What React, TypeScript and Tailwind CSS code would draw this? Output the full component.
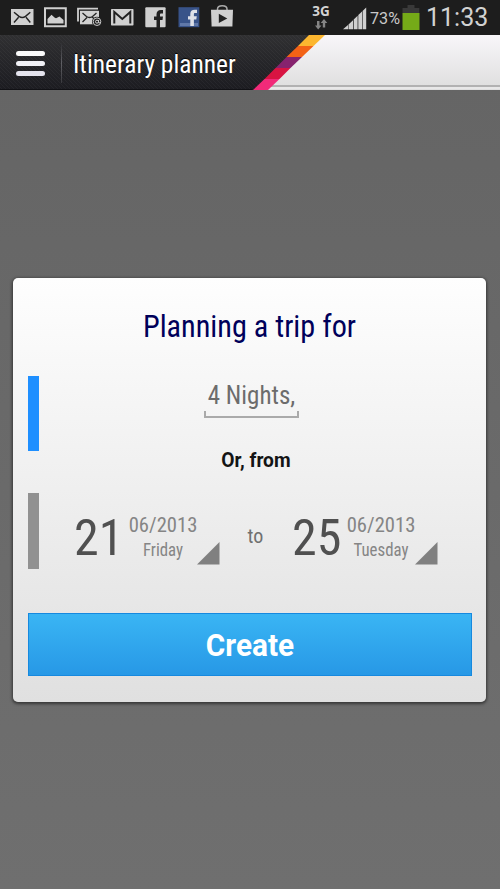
import type { ReactNode } from "react";

function StatusBar() {
  return (
    <div className="flex h-[35px] w-full bg-[#1d1d1d]">
      <svg className="block h-[35px] w-[240px] shrink-0" viewBox="0 0 240 35" fill="none">
        <rect x="11" y="9" width="22.5" height="16" fill="#d0d0d0" />
        <path d="M14 12.3L19 16.4Q22.3 18.6 25.5 16.4L30.3 12.3M14 22.5L18.6 17.3M30.3 22.5L26 17.3" stroke="#222" strokeWidth="1.4" />
        <path d="M45 8.3H65.8V26.2H45Z" stroke="#d0d0d0" strokeWidth="2" />
        <path d="M47.5 23.5V19L51.5 14.8L54.5 17.5L56 18.3L59.5 16.5L63.5 20V23.5Z" fill="#d0d0d0" />
        <path d="M78 21.6V8.6H98" stroke="#d0d0d0" strokeWidth="1.8" />
        <rect x="80" y="10.8" width="19" height="13.5" fill="#d0d0d0" />
        <path d="M82.5 13 L86.5 16.5Q89.5 18.5 92.5 16.5L96.5 13 M82.5 22 L87 17.5 M96 20 L92 17" stroke="#222" strokeWidth="1.3" />
        <circle cx="97" cy="21.7" r="5" fill="#222" />
        <circle cx="97" cy="21.7" r="3.8" stroke="#c8c8c8" strokeWidth="1" />
        <circle cx="97" cy="21.7" r="1.5" stroke="#c8c8c8" strokeWidth="1" />
        <path d="M98.5 20V22.8H100.3" stroke="#c8c8c8" strokeWidth="1" />
        <rect x="111" y="9" width="22.5" height="16.5" rx="0.7" fill="#d0d0d0" />
        <path d="M114.3 23.5V12L122.3 19L130.3 12V23.5" stroke="#222" strokeWidth="2" />
        <rect x="145.3" y="7.2" width="20.3" height="20" rx="1" fill="#d0d0d0" />
        <path d="M156.5 28V20H154V16.6H156.5V14.5C156.5 11.5 158 10 161 10H163V13.4H161.3C160.3 13.4 160 13.8 160 15V16.6H163L162.5 20H160V28Z" fill="#222" />
        <rect x="178.5" y="7.2" width="20.8" height="20" fill="#385389" />
        <rect x="180" y="23" width="18" height="3" fill="#6078a8" />
        <path d="M190.3 26V19.5H188V16.3H190.3V14C190.3 11 191.8 9.8 194.8 9.8H197V13H195.2C194.2 13 193.9 13.3 193.9 14.5V16.3H196.8L196.3 19.5H193.9V26Z" fill="#dde0e8" />
        <path d="M217.5 10V9C217.5 4.5 227 4.5 227 9V10" stroke="#aaa" strokeWidth="1.5" />
        <path d="M211 9.7H233L232.4 26.5H211.6Z" fill="#d0d0d0" />
        <path d="M218.8 13.7L227.3 18.4L218.8 23Z" fill="#222" />
      </svg>
      <div className="ml-[68px] w-[26px] pt-[4px] text-center font-['Open_Sans',sans-serif] text-[13.5px] leading-[15px] font-bold text-[#d3d3d3]">
        3G
        <svg className="mx-auto block h-[11px] w-[14px]" viewBox="0 0 14 11" fill="#858585">
          <path d="M3 2H5.5V6.5H7.5L4.2 10.5L1 6.5H3ZM8.8 8.5H11.2V4H13.3L10 0L6.7 4H8.8Z" />
        </svg>
      </div>
      <svg className="mt-[7px] ml-[9px] block h-[23px] w-[24px]" viewBox="0 0 24 23" fill="#d0d0d0">
        <path d="M0 22.2L5 18V22.2ZM5.5 17.5L10 13.2V22.2H5.5ZM10.7 12.5L14.6 8.8V22.2H10.7ZM15.3 8.1L19 4.6V22.2H15.3ZM19.6 4L23.2 .6V22.2H19.6Z" />
      </svg>
      <div className="ml-[3px] w-[31px] pt-[8px] font-[Roboto,sans-serif] text-[17px] leading-5 whitespace-nowrap text-[#c9c9c9]">
        <span className="inline-block origin-left scale-x-[0.95]">73%</span>
      </div>
      <svg className="mt-[5px] ml-[1px] block h-[25px] w-[18px]" viewBox="0 0 18 25">
        <path d="M5.5 0H12.5V3H17.3V8H.5V3H5.5Z" fill="#393939" />
        <rect x=".5" y="8" width="17" height="17" fill="#75aa18" />
      </svg>
      <div className="ml-[6px] pt-[3px] font-[Roboto,sans-serif] text-[25px] leading-[29px] text-[#d2d2d2]">11:33</div>
    </div>
  );
}

function Header() {
  return (
    <header className="relative flex h-[55px] items-center bg-linear-to-b from-[#303032] to-[#1c1c21]">
      <svg className="absolute inset-0 h-[55px] w-[500px]" viewBox="0 0 500 55">
        <defs>
          <linearGradient id="tab" x1="0" y1="0" x2="0" y2="1">
            <stop stopColor="#f8f6f9" />
            <stop offset="1" stopColor="#dedede" />
          </linearGradient>
          <pattern id="weave" width="4" height="4" patternUnits="userSpaceOnUse">
            <path d="M0 0L4 4" stroke="#ffffff" strokeOpacity=".035" />
          </pattern>
        </defs>
        <rect width="310" height="55" fill="url(#weave)" />
        <path d="M322 0H500V55H267Z" fill="url(#tab)" />
        <path d="M272 50H500V52H270Z" fill="#b2b2b2" />
        <path d="M270 52H500V54H268Z" fill="#e8e8e8" />
        <path d="M309 0H325L313.5 11H298Z" fill="#fcb62f" />
        <path d="M298 11H313.5L302 22H286.5Z" fill="#f36216" />
        <path d="M286.5 22H302L290.5 33H275.5Z" fill="#86236e" />
        <path d="M275.5 33H290.5L279.5 44H264.5Z" fill="#d81442" />
        <path d="M264.5 44H279.5L268 55H253Z" fill="#f12a79" />
        <path d="M0 54.5H252" stroke="#111115" />
      </svg>
      <div className="relative ml-4 flex w-[29px] flex-col gap-[5px] pt-px">
        <div className="h-[5px] rounded-full bg-[#fafafa]" />
        <div className="h-[5px] rounded-full bg-[#f1f1f6]" />
        <div className="h-[5px] rounded-full bg-[#e4e3ed]" />
      </div>
      <div className="relative ml-4 h-[40px] w-px bg-linear-to-b from-[#303033] via-[#606065] to-[#3a3a3e]" />
      <h1 className="relative ml-[11px] w-[163px] origin-left scale-x-[1.018] pt-[3px] font-[Roboto,sans-serif] text-[25px] leading-[29px] whitespace-nowrap text-white [font-stretch:75%] [text-shadow:0_-1px_1px_#000]">
        Itinerary planner
      </h1>
    </header>
  );
}

function Condensed({ className, children }: { className: string; children: ReactNode }) {
  return (
    <div className={`font-[Roboto,sans-serif] whitespace-nowrap [font-stretch:75%] ${className}`}>
      {children}
    </div>
  );
}

function DateField({ day, month, weekday }: { day: string; month: string; weekday: string }) {
  return (
    <div className="flex h-[76px] w-[147px] items-start">
      <Condensed className="w-[51px] pt-[16px] pl-px text-[50px] leading-[58px] text-[#505050]">{day}</Condensed>
      <div className="ml-[4px] w-[69px] pt-[20px] text-center text-[#858585]">
        <Condensed className="scale-x-[1.03] pl-px text-[20px] leading-[24px]">{month}</Condensed>
        <Condensed className="scale-x-[0.96] pl-px text-[17.5px] leading-[26px]">{weekday}</Condensed>
      </div>
      <svg className="mt-[49px] block h-[23px] w-[23px] shrink-0" viewBox="0 0 23 23">
        <path d="M0 22.5L22.5 0V22.5Z" fill="#808080" />
      </svg>
    </div>
  );
}

export default function App() {
  return (
    <div className="h-[889px] w-[500px] overflow-hidden bg-linear-to-b from-[#646464] to-[#6f6f6f]">
      <StatusBar />
      <Header />
      <main className="mx-[13px] mt-[188px] h-[424px] w-[473px] rounded-[5px] bg-linear-to-b from-[#fefefe] to-[#e0e0e0] px-[15px] pt-[29px] shadow-[0_1px_3px_1px_#383838]">
        <Condensed className="h-[40px] scale-x-[0.975] text-center text-[31px] leading-[40px] text-[#00005a]">Planning a trip for</Condensed>
        <div className="mt-[29px] flex h-[75px]">
          <div className="h-[75px] w-[11px] bg-[#1e8fff]" />
          <div className="ml-[165px] h-[42px] w-[95px]">
            <Condensed className="h-[35px] pt-[5px] text-center text-[25px] leading-[29px] text-[#6c6c6c]">4 Nights,</Condensed>
            <div className="h-[7px] border-x-2 border-b-2 border-[#aaa]" />
          </div>
        </div>
        <div className="h-[42px] scale-x-[0.985] pl-[13px] text-center font-[Roboto,sans-serif] text-[19.5px] leading-[19px] font-bold text-[#141414]">Or, from</div>
        <div className="flex h-[76px] text-[#707070]">
          <div className="h-[76px] w-[11px] bg-[#919191]" />
          <div className="w-[34px]" />
          <DateField day="21" month="06/2013" weekday="Friday" />
          <Condensed className="w-[71px] pt-[31px] text-center text-[20px] leading-[24px]">to</Condensed>
          <DateField day="25" month="06/2013" weekday="Tuesday" />
        </div>
        <button className="mt-[44px] block h-[63px] w-[444px] border border-[#1689df] bg-linear-to-b from-[#3ab5f4] to-[#2798e6] text-white">
          <div className="scale-x-[0.96] pt-px text-center font-[Roboto,sans-serif] text-[31px] leading-[61px] font-bold">Create</div>
        </button>
      </main>
    </div>
  );
}
